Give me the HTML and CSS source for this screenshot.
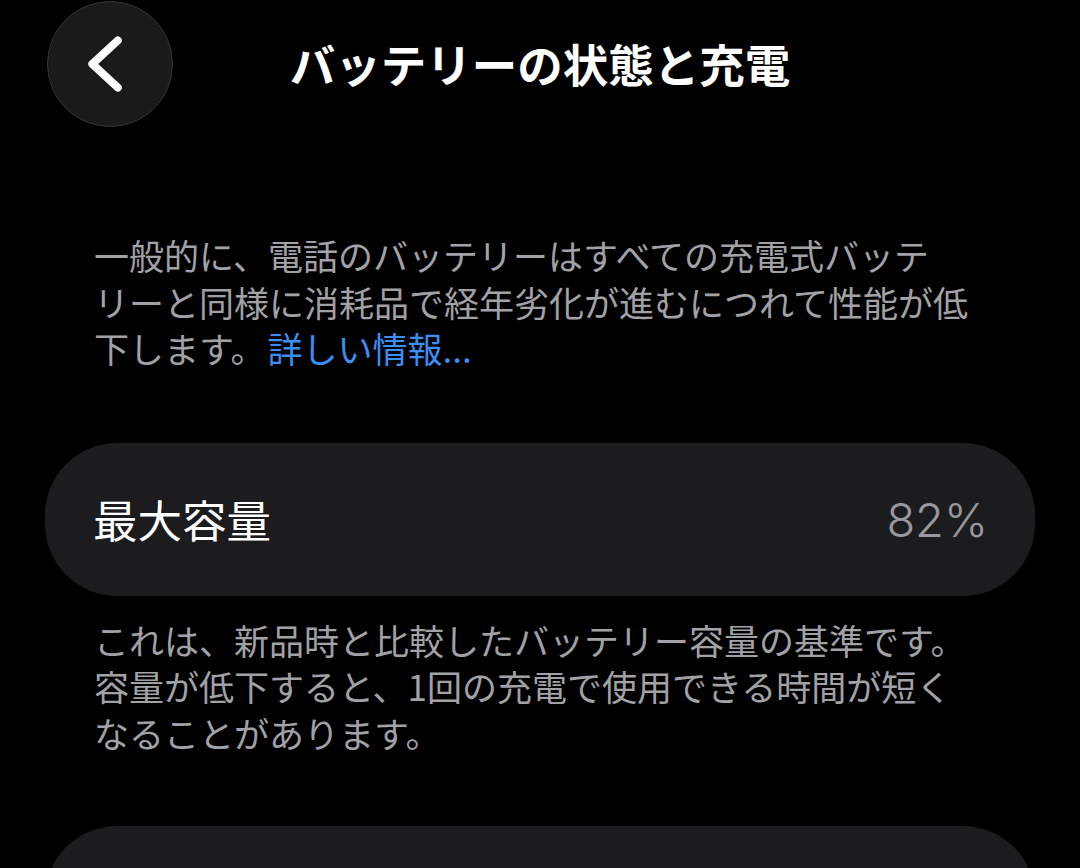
FILE: index.html
```html
<!DOCTYPE html>
<html lang="ja">
<head>
<meta charset="utf-8">
<title>バッテリーの状態と充電</title>
<link rel="stylesheet" href="styles.css">
</head>
<body>
<header class="nav">
  <div class="nav-left">
    <button class="back" aria-label="戻る">
      <svg width="126" height="126" viewBox="0 0 126 126"><path d="M71 39 L45 63 L71 87" fill="none" stroke="#ffffff" stroke-width="8" stroke-linecap="round" stroke-linejoin="round"/></svg>
    </button>
  </div>
  <h1 class="title">バッテリーの状態と充電</h1>
  <div class="nav-right"></div>
</header>
<main>
  <p class="note intro">一般的に、電話のバッテリーはすべての充電式バッテリーと同様に消耗品で経年劣化が進むにつれて性能が低下します。<a class="link" href="#">詳しい情報...</a></p>
  <section class="card">
    <span class="card-label">最大容量</span>
    <span class="card-value">82%</span>
  </section>
  <p class="note footer">これは、新品時と比較したバッテリー容量の基準です。容量が低下すると、1回の充電で使用できる時間が短くなることがあります。</p>
  <section class="card card-next"></section>
</main>
</body>
</html>
```
FILE: styles.css
```css
html, body {
  margin: 0;
  padding: 0;
  background: #000;
  height: 868px;
  overflow: hidden;
}
body {
  font-family: "Noto Sans CJK JP", "Noto Sans", sans-serif;
  color: #fff;
}
.nav {
  display: grid;
  grid-template-columns: 1fr auto 1fr;
  align-items: center;
  height: 128px;
}
.nav-left {
  padding-left: 47px;
  display: flex;
  align-items: center;
}
.back {
  width: 126px;
  height: 126px;
  border-radius: 50%;
  background: #1a1a1b;
  border: 1.5px solid #353537;
  padding: 0;
  display: flex;
  align-items: center;
  justify-content: center;
  box-sizing: border-box;
}
.back svg { display: block; }
.title {
  margin: 0;
  font-size: 45.5px;
  font-weight: 700;
  line-height: 1;
  color: #fff;
}
main {
  display: flex;
  flex-direction: column;
}
.note {
  margin: 0;
  padding-left: 94px;
  width: 881px;
  font-size: 35px;
  line-height: 46.5px;
  color: #a1a1a6;
  line-break: strict;
}
.intro { margin-top: 104px; }
.link {
  color: #3b8ef3;
  text-decoration: none;
  padding-left: 2px;
}
.card {
  margin: 71px 45px 0;
  height: 153px;
  border-radius: 72px;
  background: #1c1c1e;
  display: flex;
  align-items: center;
  justify-content: space-between;
  padding: 0 47px 0 48px;
}
.card-label {
  font-size: 44.5px;
  color: #fff;
  line-height: 1;
}
.card-value {
  font-family: "Inter", "Liberation Sans", sans-serif;
  font-size: 47px;
  font-weight: 300;
  color: #98989e;
  line-height: 1;
}
.footer { margin-top: 21px; }
.card-next {
  margin-top: 70px;
  flex-shrink: 0;
}
```
